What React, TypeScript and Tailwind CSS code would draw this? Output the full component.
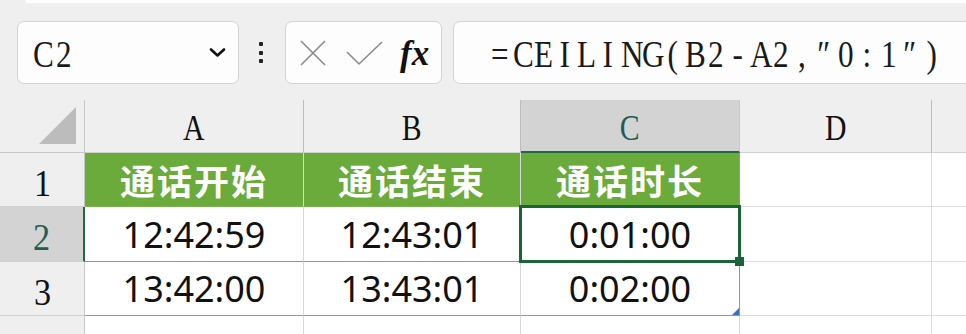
import React from 'react'

const serif = "font-['Liberation_Serif','Noto_Serif',serif]"
const sans = "font-['Noto_Sans','Noto_Sans_CJK_SC',sans-serif]"
const cjk = "font-['Noto_Sans_CJK_SC',sans-serif]"

function MonoText({ text, className }: { text: string; className?: string }) {
  return (
    <span className={`flex ${className ?? ''}`}>
      {Array.from(text).map((ch, i) => (
        <span key={i} className="inline-block w-[21.6px] text-center scale-x-[0.82]">
          {ch}
        </span>
      ))}
    </span>
  )
}

function Toolbar() {
  return (
    <div className="relative h-[100px] bg-[#efefef] overflow-hidden">
      <div className="h-[3px] ml-[25px] bg-white rounded-bl-[6px]" />
      <div className="flex items-center pl-[17px] pt-[18px]">
        <div className="flex items-center w-[222px] h-[63px] shrink-0 rounded-[7px] border border-[#d3d3d3] bg-[#fdfdfd] pl-[13px] pr-[12px]">
          <MonoText text="C2" className={`${serif} text-[38px] text-[#1a1a1a] leading-none pt-[3px]`} />
          <svg className="ml-auto" width="17" height="11" viewBox="0 0 17 11">
            <path d="M2 2.5 L8.5 8.5 L15 2.5" fill="none" stroke="#111" strokeWidth="2.6" strokeLinecap="round" strokeLinejoin="round" />
          </svg>
        </div>
        <div className="ml-[20px] flex flex-col gap-[4.5px] shrink-0">
          <span className="block w-[4px] h-[4px] rounded-[1px] bg-[#222]" />
          <span className="block w-[4px] h-[4px] rounded-[1px] bg-[#222]" />
          <span className="block w-[4px] h-[4px] rounded-[1px] bg-[#222]" />
        </div>
        <div className="ml-[22px] flex items-center w-[157px] h-[63px] shrink-0 rounded-[7px] border border-[#d3d3d3] bg-[#fdfdfd] pl-[13px]">
          <svg width="28" height="28" viewBox="0 0 28 28">
            <path d="M2 2 L26 26 M26 2 L2 26" stroke="#8a8a8a" strokeWidth="1.6" />
          </svg>
          <svg className="ml-[19px]" width="37" height="26" viewBox="0 0 37 26">
            <path d="M1 12 L13 24 L36 2" fill="none" stroke="#8a8a8a" strokeWidth="1.6" />
          </svg>
          <span className={`ml-[17px] ${serif} italic font-bold text-[35px] leading-none text-[#111] pt-[2px]`}>fx</span>
        </div>
        <div className="ml-[11px] flex items-center w-[560px] h-[63px] shrink-0 rounded-[7px] border border-[#d3d3d3] bg-[#fdfdfd] pl-[35px]">
          <MonoText text="=CEILING(B2-A2,″0:1″)" className={`${serif} text-[38px] text-[#1a1a1a] leading-none pt-[3px]`} />
        </div>
      </div>
    </div>
  )
}

const cols = ['A', 'B', 'C', 'D', '']

function Sheet() {
  const rows = [
    { n: '1', cells: ['通话开始', '通话结束', '通话时长'], head: true },
    { n: '2', cells: ['12:42:59', '12:43:01', '0:01:00'] },
    { n: '3', cells: ['13:42:00', '13:43:01', '0:02:00'] },
  ]
  const rowH = ['h-[54px]', 'h-[55px]', 'h-[54px]']

  return (
    <div className="grid grid-cols-[85px_219px_217px_219px_192px_1fr] bg-white">
      {/* column header row */}
      <div className="relative h-[53px] bg-[#efefef] border-r border-b border-[#c8c8c8] flex items-end justify-end pr-[6px] pb-[6px]">
        <svg width="40" height="40" viewBox="0 0 40 40">
          <path d="M1 38 L38 1 L38 38 Z" fill="#bcbcbc" />
        </svg>
      </div>
      {cols.map((c, i) => (
        <div
          key={i}
          className={`h-[53px] flex items-center justify-center ${serif} text-[35px] leading-none ${
            c === 'C'
              ? 'bg-[#d3d3d3] text-[#1d5e55] border-b-2 border-b-[#1f6b3f] border-r border-r-[#c8c8c8]'
              : 'bg-[#efefef] text-[#111] border-b border-[#d0d0d0] ' + (i < 4 ? 'border-r border-r-[#bdbdbd]' : '')
          }`}
        >
          <span className="pt-[5px] inline-block scale-x-[0.85]">{c}</span>
        </div>
      ))}

      {rows.map((r, ri) => (
        <React.Fragment key={r.n}>
          <div
            className={`${rowH[ri]} flex items-center justify-center ${serif} text-[38px] leading-none border-b border-[#d0d0d0] ${
              r.n === '2'
                ? 'bg-[#d3d3d3] text-[#1d5e55] border-r-2 border-r-[#1f6b3f]'
                : 'bg-[#efefef] text-[#111] border-r border-r-[#c8c8c8]'
            }`}
          >
            <span className="pt-[6px] inline-block scale-x-[0.9]">{r.n}</span>
          </div>
          {r.cells.map((v, ci) => (
            <div
              key={ci}
              className={`relative ${rowH[ri]} flex items-center justify-center border-b border-b-[#7bb153] ${
                ci === 2 ? 'border-r border-r-[#7bb153]' : 'border-r border-r-[#d8d8d8]'
              } ${
                r.head
                  ? `bg-[#6aab3b] text-white font-bold ${cjk} text-[35px] tracking-[2px] border-r-[#6aab3b]`
                  : `bg-white text-[#111] ${sans} text-[36px]`
              }`}
            >
              <span className={r.head ? 'pt-[2px]' : 'pt-[1px]'}>{v}</span>
              {r.n === '2' && ci === 2 && (
                <>
                  <div className="absolute z-10 -top-[2px] -left-[2px] -right-[2px] -bottom-[2px] border-[3px] border-[#1b6339]" />
                  <div className="absolute z-10 -right-[5px] -bottom-[5px] w-[9px] h-[9px] bg-[#1b6339]" />
                </>
              )}
              {r.n === '3' && ci === 2 && (
                <svg className="absolute right-0 bottom-0" width="7" height="7" viewBox="0 0 7 7">
                  <path d="M7 0 L7 7 L0 7 Z" fill="#3f6fc0" />
                </svg>
              )}
            </div>
          ))}
          <div className={`${rowH[ri]} bg-white border-r border-b border-[#dcdcdc]`} />
          <div className={`${rowH[ri]} bg-white border-b border-[#dcdcdc]`} />
        </React.Fragment>
      ))}

      {/* row 4, cut off by the window */}
      <div className={`h-[30px] bg-[#efefef] border-r border-[#c8c8c8] flex justify-center ${serif} text-[38px] leading-none text-[#111] pt-[14px]`}>
        4
      </div>
      <div className="h-[30px] border-r border-[#d8d8d8]" />
      <div className="h-[30px] border-r border-[#d8d8d8]" />
      <div className="h-[30px] border-r border-[#d8d8d8]" />
      <div className="h-[30px] border-r border-[#dcdcdc]" />
      <div className="h-[30px]" />
    </div>
  )
}

export default function App() {
  return (
    <div className="w-[966px] h-[334px] overflow-hidden bg-white">
      <Toolbar />
      <Sheet />
    </div>
  )
}
